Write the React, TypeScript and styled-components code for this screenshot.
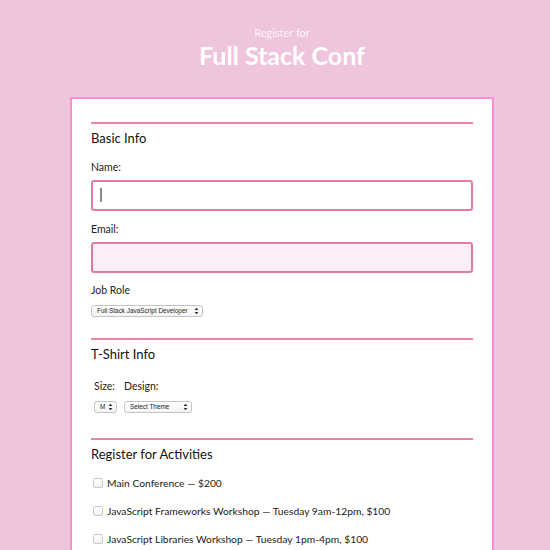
import React from 'react';
import styled, { createGlobalStyle } from 'styled-components';

const GlobalStyle = createGlobalStyle`
  html, body {
    margin: 0;
    padding: 0;
    background: #efc4dd;
    font-family: Lato, "Noto Sans", sans-serif;
  }
`

const activities = [
  'Main Conference — $200',
  'JavaScript Frameworks Workshop — Tuesday 9am-12pm, $100',
  'JavaScript Libraries Workshop — Tuesday 1pm-4pm, $100',
]

export default function App() {
  return (
    <>
      <GlobalStyle />
      <Page>
        <Header>
          <SubTitle>Register for</SubTitle>
          <Title>Full Stack Conf</Title>
        </Header>
        <Card>
          <Section>
            <Legend>Basic Info</Legend>
            <Label>Name:</Label>
            <CaretWrap>
              <TextInput type="text" />
            </CaretWrap>
            <Label $top={11}>Email:</Label>
            <TextInput type="email" $filled />
            <Label $top={10} $bottom={8}>Job Role</Label>
            <SelectBox $width={112}>
              <Select defaultValue="fs">
                <option value="fs">Full Stack JavaScript Developer</option>
              </Select>
              <Arrows />
            </SelectBox>
          </Section>

          <Section $top={21}>
            <Legend>T-Shirt Info</Legend>
            <ShirtRow>
              <ShirtCol>
                <Label $bottom={8}>Size:</Label>
                <SelectBox $width={23}>
                  <Select defaultValue="m">
                    <option value="m">M</option>
                  </Select>
                  <Arrows />
                </SelectBox>
              </ShirtCol>
              <ShirtCol>
                <Label $bottom={8}>Design:</Label>
                <SelectBox $width={68}>
                  <Select defaultValue="">
                    <option value="">Select Theme</option>
                  </Select>
                  <Arrows />
                </SelectBox>
              </ShirtCol>
            </ShirtRow>
          </Section>

          <Section $top={25}>
            <Legend>Register for Activities</Legend>
            <ActivityList>
              {activities.map(a => (
                <Activity key={a}>
                  <Check type="checkbox" />
                  <span>{a}</span>
                </Activity>
              ))}
            </ActivityList>
          </Section>
        </Card>
      </Page>
    </>
  )
}

const Arrows = () => (
  <ArrowIcon width="5" height="8" viewBox="0 0 5 8">
    <path d="M0.5 3 L2.5 0.8 L4.5 3 Z" fill="#333" />
    <path d="M0.5 5 L2.5 7.2 L4.5 5 Z" fill="#333" />
  </ArrowIcon>
)

const Page = styled.div`
  padding: 26px 0 0 14px;
  box-sizing: border-box;
  min-height: 550px;
  overflow: hidden;
`
const Header = styled.header`
  text-align: center;
  color: #fff;
`
const SubTitle = styled.div`
  font-size: 11px;
  line-height: 13px;
  color: rgba(255, 255, 255, 0.85);
`
const Title = styled.h1`
  margin: 1px 0 0;
  font-size: 25px;
  line-height: 30px;
  font-weight: 700;
`
const Card = styled.main`
  width: 424px;
  box-sizing: border-box;
  margin: 27px auto 0;
  background: #fff;
  border: 2px solid #fb8ecf;
  border-bottom: none;
  padding: 23px 19px 40px;
`
const Section = styled.section<{ $top?: number }>`
  margin-top: ${p => p.$top ?? 0}px;
  border-top: 2px solid #e884a8;
  display: flex;
  flex-direction: column;
  align-items: flex-start;
`
const Legend = styled.h2`
  margin: 5px 0 0;
  font-size: 13px;
  line-height: 18px;
  font-weight: 400;
  color: #111;
`
const Label = styled.label<{ $top?: number; $bottom?: number }>`
  display: block;
  margin-top: ${p => p.$top ?? 13}px;
  margin-bottom: ${p => p.$bottom ?? 6}px;
  font-size: 10.5px;
  line-height: 14px;
  color: #222;
`
const CaretWrap = styled.div`
  position: relative;
  width: 100%;

  &::after {
    content: '';
    position: absolute;
    left: 9px;
    top: 8px;
    width: 1.5px;
    height: 14px;
    background: #8a8a8a;
  }
`
const TextInput = styled.input<{ $filled?: boolean }>`
  display: block;
  width: 100%;
  height: 31px;
  box-sizing: border-box;
  border: 2px solid #e27ca7;
  border-radius: 3px;
  background: ${p => (p.$filled ? '#fbeef6' : '#fff')};
  outline: none;
  padding: 0 8px;
  font: inherit;
`
const SelectBox = styled.div<{ $width: number }>`
  position: relative;
  width: ${p => p.$width}px;
  height: 12px;
`
const Select = styled.select`
  appearance: none;
  -webkit-appearance: none;
  display: block;
  width: 100%;
  height: 12px;
  box-sizing: border-box;
  margin: 0;
  padding: 0 9px 0 5px;
  border: 1px solid #c4c4c4;
  border-radius: 3px;
  background: linear-gradient(#fff, #f4f4f4);
  font-family: "Liberation Sans", Arial, sans-serif;
  font-size: 6.4px;
  line-height: 10px;
  color: #222;
  outline: none;
`
const ArrowIcon = styled.svg`
  position: absolute;
  right: 4px;
  top: 2px;
  pointer-events: none;
`
const ShirtRow = styled.div`
  display: flex;
  gap: 7px;
  margin: 3px 0 0 3px;
`
const ShirtCol = styled.div`
  display: flex;
  flex-direction: column;
  align-items: flex-start;
`
const ActivityList = styled.div`
  margin-top: 6px;
  display: flex;
  flex-direction: column;
  width: 100%;
`
const Activity = styled.label`
  display: flex;
  align-items: center;
  gap: 4px;
  height: 28px;
  padding-left: 2px;
  font-size: 10.3px;
  color: #222;
`
const Check = styled.input`
  appearance: none;
  -webkit-appearance: none;
  margin: 0;
  width: 10px;
  height: 10px;
  border: 1px solid #c9c9c9;
  border-radius: 2px;
  background: linear-gradient(#fff, #f3f3f3);
`
